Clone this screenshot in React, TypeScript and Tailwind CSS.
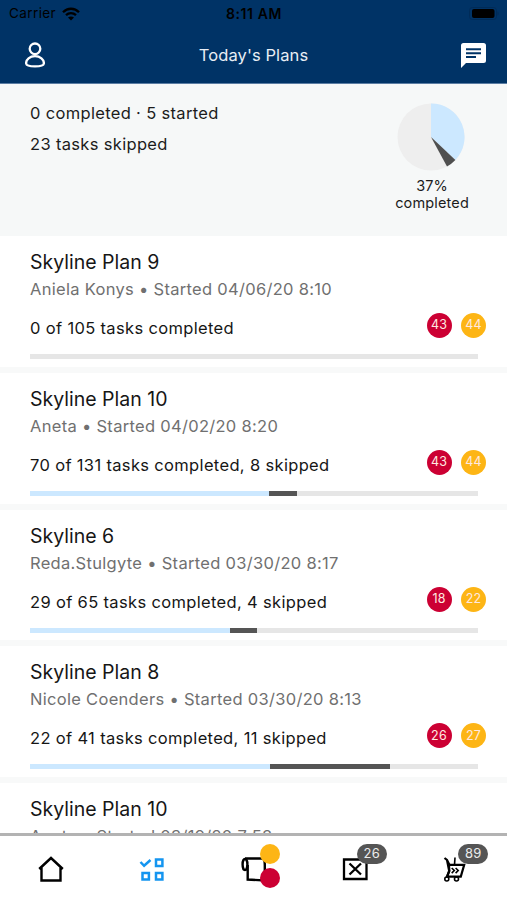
type Plan = {
  name: string;
  owner: string;
  started: string;
  summary: string;
  done: number;
  skipped: number;
  red: number;
  yellow: number;
};

const plans: Plan[] = [
  { name: 'Skyline Plan 9', owner: 'Aniela Konys', started: '04/06/20 8:10', summary: '0 of 105 tasks completed', done: 0, skipped: 0, red: 43, yellow: 44 },
  { name: 'Skyline Plan 10', owner: 'Aneta', started: '04/02/20 8:20', summary: '70 of 131 tasks completed, 8 skipped', done: 53.4, skipped: 6.1, red: 43, yellow: 44 },
  { name: 'Skyline 6', owner: 'Reda.Stulgyte', started: '03/30/20 8:17', summary: '29 of 65 tasks completed, 4 skipped', done: 44.6, skipped: 6.1, red: 18, yellow: 22 },
  { name: 'Skyline Plan 8', owner: 'Nicole Coenders', started: '03/30/20 8:13', summary: '22 of 41 tasks completed, 11 skipped', done: 53.6, skipped: 26.8, red: 26, yellow: 27 },
];

// only the top of this row is visible above the tab bar
const nextPlan = { name: 'Skyline Plan 10', owner: 'Aneta', started: '03/19/20 7:58' };

function StatusBar() {
  return (
    <div className="grid h-[27px] grid-cols-3 items-center pl-[9px] pr-[8px] text-[13.5px] text-black">
      <div className="flex items-center gap-[6px]">
        <span className="tracking-[0.4px]">Carrier</span>
        <svg width="18" height="14" viewBox="0 0 18 14" fill="none" stroke="currentColor" strokeWidth="2.3">
          <path d="M1 5.2C5.5.6 12.5.6 17 5.2" />
          <path d="M4 8.2c2.9-2.8 7.1-2.8 10 0" />
          <path d="M9 13.4 6 10.5c1.7-1.5 4.3-1.5 6 0Z" fill="currentColor" stroke="none" />
        </svg>
      </div>
      <span className="text-center text-[14px] font-semibold tracking-[0.6px]">8:11 AM</span>
      <svg className="justify-self-end" width="30" height="13" viewBox="0 0 30 13">
        <rect x="0.5" y="0.5" width="27" height="12" rx="3" fill="none" stroke="#002b57" />
        <rect x="3" y="2" width="22.5" height="9" rx="2" fill="#000" />
        <path d="M28.5 4.5c1.4.4 1.4 3.6 0 4z" fill="#002b57" />
      </svg>
    </div>
  );
}

function Header() {
  return (
    <header className="h-[84px] shrink-0 border-b border-[#5b7da3] bg-[#003366]">
      <StatusBar />
      <div className="grid h-[56px] grid-cols-[1fr_auto_1fr] items-center pl-[25px] pr-[22px]">
        <svg width="20" height="26" viewBox="0 0 20 26" fill="none" stroke="#fff" strokeWidth="2.3">
          <circle cx="10" cy="6.8" r="5.3" />
          <path d="M10 14.2c-5.3 0-8.9 3.3-8.9 7 0 2.1 2 3.2 8.9 3.2s8.9-1.1 8.9-3.2c0-3.7-3.6-7-8.9-7Z" />
        </svg>
        <h1 className="pr-[3px] text-[16.5px] tracking-[0.1px] text-[#e8eef5]">Today's Plans</h1>
        <svg className="mr-[-1px] justify-self-end" width="25" height="25" viewBox="0 0 25 25">
          <path d="M2.5 0h20A2.5 2.5 0 0 1 25 2.5v15a2.5 2.5 0 0 1-2.5 2.5H5l-5 5V2.5A2.5 2.5 0 0 1 2.5 0Z" fill="#fff" />
          <path d="M5 6.2h15M5 10.2h15M5 14h10" stroke="#003366" strokeWidth="2" />
        </svg>
      </div>
    </header>
  );
}

function Summary() {
  return (
    <section className="flex h-[152px] shrink-0 justify-between bg-[#f6f8f8] pl-[30px] pr-[38px] text-[#1c1c1c]">
      <div className="pt-[14px] text-[16.5px] leading-[30.5px] tracking-[0.33px]">
        <p>0 completed · 5 started</p>
        <p>23 tasks skipped</p>
      </div>
      <div className="flex flex-col items-center pt-[19px]">
        <svg className="mr-[2px]" width="68" height="68" viewBox="-34 -34 68 68">
          <circle r="33.5" fill="#eeeeee" />
          <path d="M0 0V-33.5A33.5 33.5 0 0 1 24.4 23Z" fill="#cce8ff" />
          <path d="M0 0 24.4 23A33.5 33.5 0 0 1 16 29.4Z" fill="#4f4f4f" />
        </svg>
        <p className="mt-[6px] text-center text-[14.5px] leading-[17px] tracking-[0.15px]">
          37%
          <br />
          completed
        </p>
      </div>
    </section>
  );
}

function PlanHeading({ name, owner, started }: Pick<Plan, 'name' | 'owner' | 'started'>) {
  return (
    <>
      <h2 className="pt-[13px] text-[19.5px] leading-[26px] text-[#161616]">{name}</h2>
      <p className="text-[16.5px] leading-[28px] tracking-[0.3px] text-[#707070]">
        {owner} • Started {started}
      </p>
    </>
  );
}

function PlanRow({ plan }: { plan: Plan }) {
  return (
    <li className="h-[136.8px] shrink-0 border-b-[6px] border-[#f8f9f9] pl-[30px] pr-[21px]">
      <PlanHeading name={plan.name} owner={plan.owner} started={plan.started} />
      <div className="mt-[8px] flex h-[32px] justify-between">
        <p className="pt-px text-[16.5px] leading-[32px] tracking-[0.34px] text-[#161616]">{plan.summary}</p>
        <div className="flex gap-[9.5px] pt-[2px] text-[12.5px] tracking-[0.2px] text-[#ffe9e0]">
          <span className="flex size-[25px] items-center justify-center rounded-full bg-[#cc0033]">{plan.red}</span>
          <span className="flex size-[25px] items-center justify-center rounded-full bg-[#fdb515]">{plan.yellow}</span>
        </div>
      </div>
      <div className="mr-[8px] mt-[11px] flex h-[5px] bg-[#e6e6e6]">
        <div className="bg-[#cce8ff]" style={{ width: `${plan.done}%` }} />
        <div className="bg-[#555555]" style={{ width: `${plan.skipped}%` }} />
      </div>
    </li>
  );
}

function CountBadge({ count }: { count: number }) {
  return (
    <span className="absolute left-[15px] top-[-12px] flex h-[20px] w-[30px] items-center justify-center rounded-full bg-[#555555] text-[13px] tracking-[0.3px] text-[#ececec]">
      {count}
    </span>
  );
}

function TabBar() {
  return (
    <nav className="grid h-[67px] shrink-0 grid-cols-5 border-t-[3px] border-[#b3b3b3] bg-white pt-[20px]">
      <div className="flex justify-center pl-px">
        <svg width="26" height="26" viewBox="0 0 26 26" fill="none" stroke="#000" strokeWidth="2.4">
          <path d="M1.2 13 13 2l11.8 11M3.5 11.3v13.2h19V11.3" />
        </svg>
      </div>
      <div className="flex justify-center">
        <svg width="26" height="26" viewBox="0 0 26 26" fill="none" stroke="#1495f0" strokeWidth="2.5">
          <path d="m1.5 6 3.6 3.8L11.5 4" />
          <path d="M17 3.5h6.4V10H17zM3.5 17h6.4v6.4H3.5zM17 17h6.4v6.4H17z" />
        </svg>
      </div>
      <div className="flex justify-center pl-[2px]">
        <div className="relative h-[28px] w-[26px]">
          <svg width="26" height="28" viewBox="0 0 26 28" fill="none" stroke="#000" strokeWidth="2.4">
            <ellipse cx="4" cy="8.5" rx="2.4" ry="5.5" />
            <path d="M4 2.5h17c2 0 2.8 3 2.8 6.5v15.5L6.7 23.5V9" />
          </svg>
          <span className="absolute left-[19px] top-[-12px] size-[20px] rounded-full bg-[#fdb515]" />
          <span className="absolute left-[19px] top-[12px] size-[20px] rounded-full bg-[#cc0033]" />
        </div>
      </div>
      <div className="flex justify-center">
        <div className="relative size-[26px]">
          <svg width="26" height="26" viewBox="0 0 26 26" fill="none" stroke="#000" strokeWidth="2.3">
            <path d="M2 3.5h22.5V23H2zM7.5 7.5l11.5 11M19 7.5l-11.5 11" />
          </svg>
          <CountBadge count={26} />
        </div>
      </div>
      <div className="flex justify-center">
        <div className="relative size-[26px]">
          <svg width="26" height="28" viewBox="0 0 26 28" fill="none" stroke="#000" strokeWidth="2.2">
            <path d="M1.5 2 4 4l2.5 5M4 4l2.2 11L4 21" />
            <path d="M6 8.8h15.2l-3.4 11.8H4L6.3 15z" />
            <path d="M11.5 9 12 1.5" strokeWidth="1.6" />
            <path d="m8.7 12 2.6 2.5-2.6 2.6M12.6 12l2.6 2.5-2.6 2.6" strokeWidth="1.6" />
            <circle cx="3.8" cy="23" r="2" strokeWidth="1.6" />
            <circle cx="13.5" cy="23" r="2" strokeWidth="1.6" />
          </svg>
          <CountBadge count={89} />
        </div>
      </div>
    </nav>
  );
}

export default function App() {
  return (
    <div className="flex h-screen w-full flex-col overflow-hidden bg-white font-['Inter',sans-serif]">
      <Header />
      <Summary />
      <ul className="flex min-h-0 flex-1 flex-col overflow-hidden">
        {plans.map((plan) => (
          <PlanRow key={plan.name} plan={plan} />
        ))}
        <li className="shrink-0 pl-[30px]">
          <PlanHeading {...nextPlan} />
        </li>
      </ul>
      <TabBar />
    </div>
  );
}
